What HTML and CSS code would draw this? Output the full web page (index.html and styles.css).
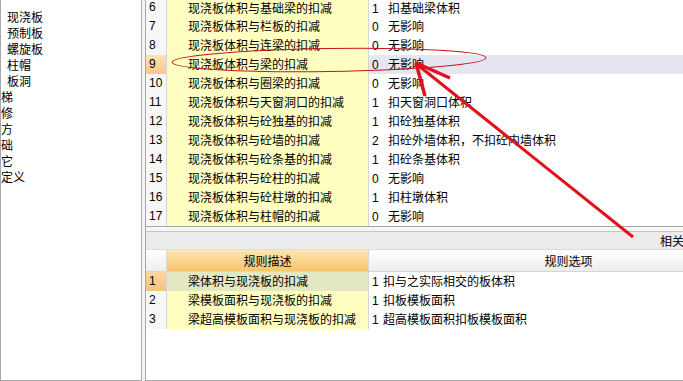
FILE: index.html
```html
<!DOCTYPE html>
<html>
<head>
    <meta charset="UTF-8">
    <title>扣减规则</title>
    <link rel="stylesheet" href="styles.css">
</head>
<body>
    <div class="app">
        <div class="tree">
            <div class="node sub">现浇板</div>
            <div class="node sub">预制板</div>
            <div class="node sub">螺旋板</div>
            <div class="node sub">柱帽</div>
            <div class="node sub">板洞</div>
            <div class="node">梯</div>
            <div class="node">修</div>
            <div class="node">方</div>
            <div class="node">础</div>
            <div class="node">它</div>
            <div class="node">定义</div>
        </div>
        <div class="gap"></div>
        <div class="main">
            <div class="top">
                <div class="row first"><div class="no">6</div><div class="desc">现浇板体积与基础梁的扣减</div><div class="val"><span class="n">1</span>扣基础梁体积</div></div>
                <div class="row"><div class="no">7</div><div class="desc">现浇板体积与栏板的扣减</div><div class="val"><span class="n">0</span>无影响</div></div>
                <div class="row"><div class="no">8</div><div class="desc">现浇板体积与连梁的扣减</div><div class="val"><span class="n">0</span>无影响</div></div>
                <div class="row current"><div class="no">9</div><div class="desc">现浇板体积与梁的扣减</div><div class="val"><span class="n">0</span>无影响</div></div>
                <div class="row"><div class="no">10</div><div class="desc">现浇板体积与圈梁的扣减</div><div class="val"><span class="n">0</span>无影响</div></div>
                <div class="row"><div class="no">11</div><div class="desc">现浇板体积与天窗洞口的扣减</div><div class="val"><span class="n">1</span>扣天窗洞口体积</div></div>
                <div class="row"><div class="no">12</div><div class="desc">现浇板体积与砼独基的扣减</div><div class="val"><span class="n">1</span>扣砼独基体积</div></div>
                <div class="row"><div class="no">13</div><div class="desc">现浇板体积与砼墙的扣减</div><div class="val"><span class="n">2</span>扣砼外墙体积，不扣砼内墙体积</div></div>
                <div class="row"><div class="no">14</div><div class="desc">现浇板体积与砼条基的扣减</div><div class="val"><span class="n">1</span>扣砼条基体积</div></div>
                <div class="row"><div class="no">15</div><div class="desc">现浇板体积与砼柱的扣减</div><div class="val"><span class="n">0</span>无影响</div></div>
                <div class="row"><div class="no">16</div><div class="desc">现浇板体积与砼柱墩的扣减</div><div class="val"><span class="n">1</span>扣柱墩体积</div></div>
                <div class="row"><div class="no">17</div><div class="desc">现浇板体积与柱帽的扣减</div><div class="val"><span class="n">0</span>无影响</div></div>
            </div>
            <div class="splitter"></div>
            <div class="bar"><span class="bar-title">相关</span></div>
            <div class="bottom">
                <div class="row head"><div class="no"></div><div class="desc">规则描述</div><div class="val">规则选项</div></div>
                <div class="row current"><div class="no">1</div><div class="desc">梁体积与现浇板的扣减</div><div class="val"><span class="n small">1</span>扣与之实际相交的板体积</div></div>
                <div class="row"><div class="no">2</div><div class="desc">梁模板面积与现浇板的扣减</div><div class="val"><span class="n small">1</span>扣板模板面积</div></div>
                <div class="row"><div class="no">3</div><div class="desc">梁超高模板面积与现浇板的扣减</div><div class="val"><span class="n small">1</span>超高模板面积扣板模板面积</div></div>
            </div>
        </div>
        <svg class="marks" width="683" height="381" viewBox="0 0 683 381">
            <ellipse cx="329" cy="60" rx="157" ry="11.5" transform="rotate(-0.8 329 60)" fill="none" stroke="#c8141e" stroke-width="1"/>
            <line x1="633" y1="237" x2="419" y2="66" stroke="#e0121c" stroke-width="3"/>
            <line x1="416" y1="63" x2="450" y2="78" stroke="#e0121c" stroke-width="3.5"/>
            <line x1="416" y1="63" x2="425" y2="96" stroke="#e0121c" stroke-width="3.5"/>
        </svg>
    </div>
</body>
</html>
```
FILE: styles.css
```css
body {
    margin: 0;
    font-family: "Noto Sans CJK SC", "Liberation Sans", sans-serif;
    font-size: 12px;
    color: #000;
    background-color: #fff;
}
.app {
    position: relative;
    width: 683px;
    height: 381px;
    display: grid;
    grid-template-columns: 142px 3px 1fr;
    overflow: hidden;
}
.tree {
    border-left: 1px solid #a8a8a8;
    border-right: 1px solid #a8a8a8;
    border-bottom: 1px solid #a8a8a8;
    padding-top: 9px;
    background-color: #fff;
    overflow: hidden;
}
.node {
    height: 16px;
    line-height: 16px;
    white-space: nowrap;
}
.node.sub {
    padding-left: 6px;
}
.gap {
    background-color: #f4f4f4;
}
.main {
    border-left: 1px solid #a8a8a8;
    border-bottom: 1px solid #a8a8a8;
    display: flex;
    flex-direction: column;
    overflow: hidden;
}
.top {
    height: 226px;
    overflow: hidden;
    flex: none;
}
.row {
    display: grid;
    grid-template-columns: 21px 202px 396px;
    height: 19px;
    box-sizing: border-box;
    border-bottom: 1px solid #d6d6d6;
    line-height: 18px;
    white-space: nowrap;
}
.row.first {
    height: 17px;
    line-height: 15px;
}
.no {
    padding-left: 3px;
    background-color: #f7f7f7;
    border-right: 1px solid #d6d6d6;
    font-family: "Liberation Sans", sans-serif;
}
.desc {
    padding-left: 21px;
    background-color: #ffffc2;
    border-right: 1px solid #d6d6d6;
}
.val {
    padding-left: 3px;
    background-color: #fff;
}
.n {
    display: inline-block;
    width: 16px;
    font-family: "Liberation Sans", sans-serif;
}
.n.small {
    width: 11px;
}
.top .row.current .no {
    background: linear-gradient(#fde2b4, #f7c98a);
}
.top .row.current .val {
    background-color: #e6e6f2;
}
.splitter {
    height: 4px;
    border-top: 1px solid #a8a8a8;
    border-bottom: 1px solid #c4c4c4;
    background-color: #f6f6f6;
    flex: none;
}
.bar {
    height: 18px;
    box-sizing: border-box;
    border-bottom: 1px solid #dcdcdc;
    background-color: #ececec;
    line-height: 17px;
    padding-left: 514px;
    white-space: nowrap;
    flex: none;
}
.bottom {
    flex: 1;
    background-color: #fff;
}
.row.head {
    height: 22px;
    line-height: 21px;
    border-bottom: 1px solid #d6d6d6;
}
.row.head .no {
    background: linear-gradient(#ffffff, #eeeeee);
}
.row.head .desc {
    padding-left: 0;
    text-align: center;
    background: linear-gradient(#fde6b0, #f7c66c);
}
.row.head .val {
    text-align: center;
    background: linear-gradient(#ffffff, #ededed);
}
.bottom .row.current .no {
    background: linear-gradient(#fbd89c, #f5c47a);
}
.bottom .row.current .desc {
    background-color: #e4e8c2;
}
.marks {
    position: absolute;
    left: 0;
    top: 0;
    pointer-events: none;
}
```
